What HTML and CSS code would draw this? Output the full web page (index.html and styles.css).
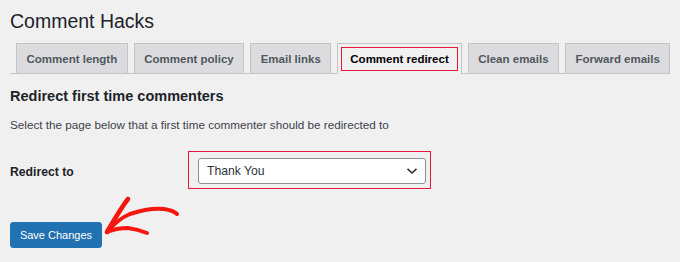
FILE: index.html
```html
<!DOCTYPE html>
<html lang="en">
<head>
  <meta charset="UTF-8" />
  <meta name="viewport" content="width=device-width, initial-scale=1.0"/>
  <title>Comment Hacks</title>
  <link rel="stylesheet" href="styles.css">
</head>
<body>

  <div class="wrap">
    <h1 class="page-title">Comment Hacks</h1>

    <nav class="tabs">
      <a class="tab">Comment length</a>
      <a class="tab">Comment policy</a>
      <a class="tab">Email links</a>
      <a class="tab tab-active"><span class="highlight">Comment redirect</span></a>
      <a class="tab">Clean emails</a>
      <a class="tab">Forward emails</a>
    </nav>

    <h2 class="section-title">Redirect first time commenters</h2>
    <p class="description">Select the page below that a first time commenter should be redirected to</p>

    <div class="form-row">
      <label class="field-label" for="redirect">Redirect to</label>
      <div class="select-box">
        <div class="select" id="redirect">
          <span>Thank You</span>
          <svg class="chevron" width="12" height="8" viewBox="0 0 12 8">
            <path d="M1.5 1.8 L6 6 L10.5 1.8" fill="none" stroke="#2c3338" stroke-width="1.6"/>
          </svg>
        </div>
      </div>
    </div>

    <div class="submit-row">
      <button class="btn-primary">Save Changes</button>
      <!-- hand drawn arrow pointing at the button -->
      <svg class="arrow" width="85" height="55" viewBox="0 0 85 55">
        <path d="M7 42 C14 30 21 18 28 9" fill="none" stroke="#f5160f" stroke-width="4.5" stroke-linecap="round"/>
        <path d="M7 42 C14 39 21 38 28 38 C36 39 42 41 47 43" fill="none" stroke="#f5160f" stroke-width="4" stroke-linecap="round"/>
        <path d="M7 42 C12 36 20 28 30 24 C42 20 55 18 64 19 C71 20 75 22 77 24" fill="none" stroke="#f5160f" stroke-width="4" stroke-linecap="round"/>
      </svg>
    </div>
  </div>

</body>
</html>
```

FILE: styles.css
```css
body {
  margin: 0;
  background: #f0f0f1;
  color: #1d2327;
  font-family: "Liberation Sans", Arial, sans-serif;
}

.wrap {
  padding: 0 10px;
}

.page-title {
  margin: 0;
  padding: 6px 0 7px;
  font-size: 19.5px;
  font-weight: 400;
  line-height: 30px;
  color: #1d2327;
}

.tabs {
  display: flex;
  gap: 6px;
  padding-left: 6px;
  border-bottom: 1px solid #c3c4c7;
  height: 30px;
  align-items: flex-end;
}

.tab {
  box-sizing: border-box;
  height: 30px;
  padding: 0 9.5px;
  display: flex;
  align-items: center;
  background: #dcdcde;
  border: 1px solid #c3c4c7;
  border-bottom: none;
  color: #50575e;
  font-size: 11.5px;
  font-weight: 700;
  white-space: nowrap;
}

.tab-active {
  height: 31px;
  margin-bottom: -1px;
  padding: 3px 3px 3px;
  align-items: flex-start;
  background: #f0f0f1;
  color: #000;
}

.highlight {
  display: block;
  border: 1px solid #e5173a;
  padding: 2px 8px;
  line-height: 18px;
}

.section-title {
  margin: 12px 0 0;
  font-size: 14.5px;
  font-weight: 700;
  line-height: 20px;
  color: #1d2327;
}

.description {
  margin: 10px 0 0;
  font-size: 11.7px;
  line-height: 18px;
  color: #3c434a;
}

.form-row {
  display: grid;
  grid-template-columns: 178px auto;
  align-items: center;
  margin-top: 17px;
}

.field-label {
  padding-top: 3px;
  font-size: 12.2px;
  font-weight: 700;
  color: #1d2327;
}

.select-box {
  width: 243px;
  box-sizing: border-box;
  border: 1px solid #e5173a;
  padding: 6px 4px 4px 9px;
}

.select {
  box-sizing: border-box;
  height: 26px;
  display: flex;
  align-items: center;
  justify-content: space-between;
  padding: 0 7px 0 8px;
  background: #fff;
  border: 1px solid #8c8f94;
  border-radius: 3px;
  font-size: 12.2px;
  color: #2c3338;
}

.submit-row {
  position: relative;
  margin-top: 33px;
}

.btn-primary {
  box-sizing: border-box;
  width: 92px;
  height: 26px;
  padding: 0;
  background: #2271b1;
  border: 1px solid #2271b1;
  border-radius: 3px;
  color: #fff;
  font-family: "Liberation Sans", Arial, sans-serif;
  font-size: 11px;
}

.arrow {
  position: absolute;
  left: 90px;
  top: -32px;
}
```
